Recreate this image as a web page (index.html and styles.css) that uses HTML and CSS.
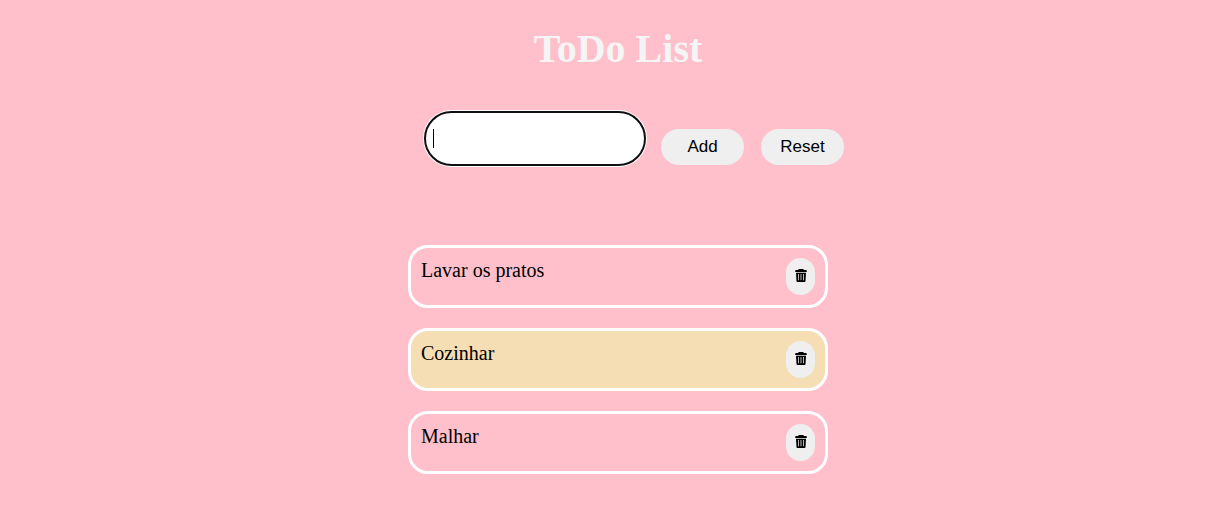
FILE: index.html
```html
<!DOCTYPE html>
<html lang="pt-BR">
<head>
<meta charset="utf-8">
<meta name="viewport" content="width=device-width, initial-scale=1">
<title>ToDo List</title>
<link rel="stylesheet" href="styles.css">
</head>
<body>
<svg class="sprite" aria-hidden="true">
  <symbol id="trash" viewBox="0 0 24 26">
    <path d="M8 0h8a1.500 1.500 0 0 1 1.500 1.500V2H22a1.500 1.500 0 0 1 1.500 1.500V6H.5V3.500A1.500 1.500 0 0 1 2 2h4.500v-.5A1.500 1.500 0 0 1 8 0z"/>
    <path fill-rule="evenodd" d="M2 7.500h20l-1 16.500a2 2 0 0 1-2 2H5a2 2 0 0 1-2-2zM6 10l.5 12.500H8L7.500 10zM11.200 10v12.500h1.600V10zM16.500 10L16 22.500h1.500L18 10z"/>
  </symbol>
</svg>
<main class="app">
  <h1 class="title">ToDo List</h1>
  <form class="task-form">
    <label class="field">
      <input class="field-input" type="text" aria-label="Task" autocomplete="off">
    </label>
    <button class="action" type="submit">Add</button>
    <button class="action" type="reset">Reset</button>
  </form>
  <ul class="tasks">
    <li class="task">
      <span class="task-name">Lavar os pratos</span>
      <button class="delete" type="button" aria-label="Delete Lavar os pratos"><svg class="icon"><use href="#trash"/></svg></button>
    </li>
    <li class="task task-done">
      <span class="task-name">Cozinhar</span>
      <button class="delete" type="button" aria-label="Delete Cozinhar"><svg class="icon"><use href="#trash"/></svg></button>
    </li>
    <li class="task">
      <span class="task-name">Malhar</span>
      <button class="delete" type="button" aria-label="Delete Malhar"><svg class="icon"><use href="#trash"/></svg></button>
    </li>
  </ul>
</main>
</body>
</html>
```
FILE: styles.css
```css
* {
  box-sizing: border-box;
}

body {
  margin: 0;
  background: pink;
  color: #000;
  font-family: "Liberation Serif", "Times New Roman", serif;
  font-size: 20px;
}

.sprite {
  display: none;
}

.app {
  display: flex;
  flex-direction: column;
  align-items: center;
  padding: 26px 0 20px 29px;
}

.title {
  margin: 0 0 39px;
  color: whitesmoke;
  font-size: 40px;
  line-height: 46px;
}

.task-form {
  display: flex;
  align-items: flex-end;
  gap: 17px;
  padding-left: 32px;
  margin-bottom: 79px;
}

.field {
  position: relative;
  display: flex;
}

/* text cursor */
.field::after {
  content: "";
  position: absolute;
  left: 9px;
  top: 18px;
  width: 1px;
  height: 19px;
  background: #000;
}

.field-input {
  width: 222px;
  height: 55px;
  padding: 0 7px;
  border: 2px solid #101010;
  border-radius: 28px;
  outline: none;
  background: #fff;
  box-shadow: 0 0 0 1px #fff;
  caret-color: transparent;
  font: 17px "Liberation Sans", Arial, sans-serif;
}

.action {
  width: 83px;
  height: 36px;
  padding: 0;
  margin-bottom: 1px;
  border: 0;
  border-radius: 20px;
  background: #efefef;
  color: #000;
  font: 17px "Liberation Sans", Arial, sans-serif;
}

.field + .action {
  margin-left: -2px;
}

.tasks {
  display: flex;
  flex-direction: column;
  gap: 20px;
  width: 100%;
  max-width: 420px;
  margin: 0;
  padding: 0;
  list-style: none;
}

.task {
  display: flex;
  align-items: flex-start;
  justify-content: space-between;
  padding: 10px;
  border: 3px solid #fff;
  border-radius: 20px;
}

.task-name {
  line-height: 24px;
}

.task-done {
  background: wheat;
}

.delete {
  display: flex;
  align-items: center;
  justify-content: center;
  width: 29px;
  height: 37px;
  padding: 0 0 2px;
  border: 0;
  border-radius: 20px;
  background: #efefef;
  color: #000;
}

.icon {
  width: 12px;
  height: 13px;
  fill: currentColor;
}
```
